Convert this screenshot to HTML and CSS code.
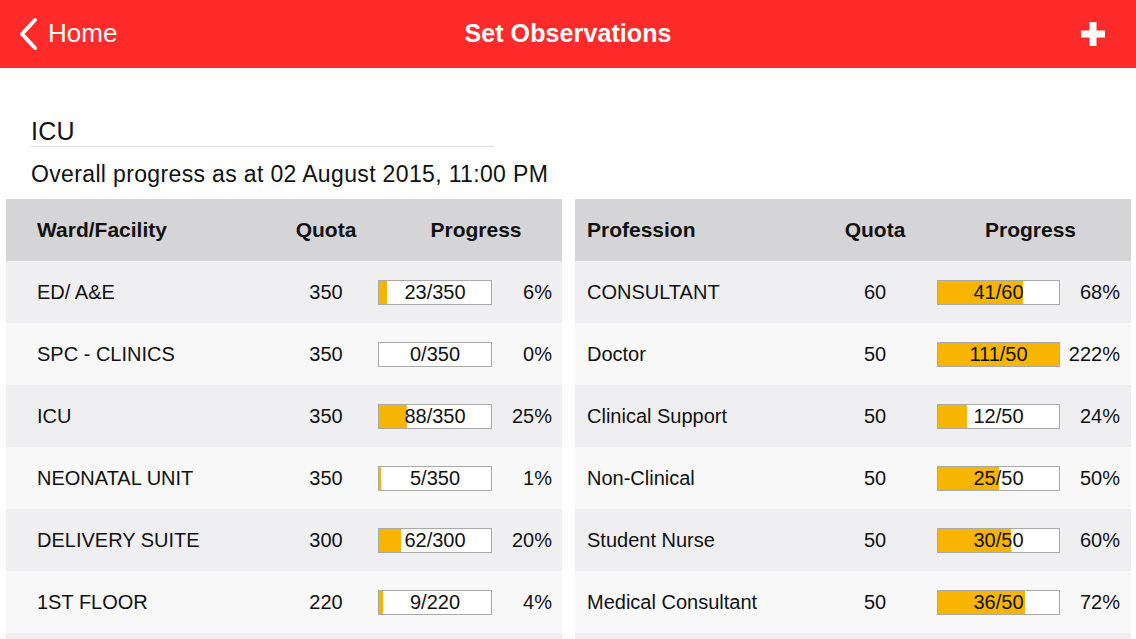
FILE: index.html
```html
<!DOCTYPE html>
<html>
<head>
<meta charset="utf-8">
<link rel="stylesheet" href="styles.css">
</head>
<body>
<header class="navbar">
  <div class="nav-back">
    <svg class="chev" width="20" height="34" viewBox="0 0 20 34"><polyline points="16,3 3,17 16,31" fill="none" stroke="#fff" stroke-width="4" stroke-linecap="round" stroke-linejoin="round"/></svg>
    <span>Home</span>
  </div>
  <div class="nav-title">Set Observations</div>
  <div class="nav-add">
    <svg width="24" height="24" viewBox="0 0 24 24"><rect x="8.5" y="0" width="7" height="24" fill="#fff"/><rect x="0" y="8.5" width="24" height="7" fill="#fff"/></svg>
  </div>
</header>

<main class="content">
  <h1 class="unit">ICU</h1>
  <p class="overall">Overall progress as at 02 August 2015, 11:00 PM</p>

  <div class="tables">
    <section class="table left">
      <div class="row head">
        <div class="c-name">Ward/Facility</div>
        <div class="c-quota">Quota</div>
        <div class="c-prog-head">Progress</div>
      </div>
      <div class="row odd">
        <div class="c-name">ED/ A&amp;E</div><div class="c-quota">350</div>
        <div class="bar"><div class="fill" style="width:7%"></div><span>23/350</span></div><div class="c-pct">6%</div>
      </div>
      <div class="row even">
        <div class="c-name">SPC - CLINICS</div><div class="c-quota">350</div>
        <div class="bar"><div class="fill" style="width:0%"></div><span>0/350</span></div><div class="c-pct">0%</div>
      </div>
      <div class="row odd">
        <div class="c-name">ICU</div><div class="c-quota">350</div>
        <div class="bar"><div class="fill" style="width:25%"></div><span>88/350</span></div><div class="c-pct">25%</div>
      </div>
      <div class="row even">
        <div class="c-name">NEONATAL UNIT</div><div class="c-quota">350</div>
        <div class="bar"><div class="fill" style="width:2%"></div><span>5/350</span></div><div class="c-pct">1%</div>
      </div>
      <div class="row odd">
        <div class="c-name">DELIVERY SUITE</div><div class="c-quota">300</div>
        <div class="bar"><div class="fill" style="width:20%"></div><span>62/300</span></div><div class="c-pct">20%</div>
      </div>
      <div class="row even">
        <div class="c-name">1ST FLOOR</div><div class="c-quota">220</div>
        <div class="bar"><div class="fill" style="width:4%"></div><span>9/220</span></div><div class="c-pct">4%</div>
      </div>
      <div class="row odd"></div>
    </section>

    <section class="table right">
      <div class="row head">
        <div class="c-name">Profession</div>
        <div class="c-quota">Quota</div>
        <div class="c-prog-head">Progress</div>
      </div>
      <div class="row odd">
        <div class="c-name">CONSULTANT</div><div class="c-quota">60</div>
        <div class="bar"><div class="fill" style="width:70%"></div><span>41/60</span></div><div class="c-pct">68%</div>
      </div>
      <div class="row even">
        <div class="c-name">Doctor</div><div class="c-quota">50</div>
        <div class="bar"><div class="fill" style="width:100%"></div><span>111/50</span></div><div class="c-pct">222%</div>
      </div>
      <div class="row odd">
        <div class="c-name">Clinical Support</div><div class="c-quota">50</div>
        <div class="bar"><div class="fill" style="width:24%"></div><span>12/50</span></div><div class="c-pct">24%</div>
      </div>
      <div class="row even">
        <div class="c-name">Non-Clinical</div><div class="c-quota">50</div>
        <div class="bar"><div class="fill" style="width:50%"></div><span>25/50</span></div><div class="c-pct">50%</div>
      </div>
      <div class="row odd">
        <div class="c-name">Student Nurse</div><div class="c-quota">50</div>
        <div class="bar"><div class="fill" style="width:60%"></div><span>30/50</span></div><div class="c-pct">60%</div>
      </div>
      <div class="row even">
        <div class="c-name">Medical Consultant</div><div class="c-quota">50</div>
        <div class="bar"><div class="fill" style="width:72%"></div><span>36/50</span></div><div class="c-pct">72%</div>
      </div>
      <div class="row odd"></div>
    </section>
  </div>
</main>
</body>
</html>
```
FILE: styles.css
```css
* { box-sizing: border-box; }
html, body { margin: 0; padding: 0; }
body {
  width: 1136px;
  height: 639px;
  overflow: hidden;
  background: #fff;
  font-family: "Liberation Sans", Arial, sans-serif;
  color: #111;
}

.navbar {
  height: 68px;
  background: #ff2a2a;
  color: #fff;
  display: flex;
  align-items: center;
  justify-content: space-between;
  padding: 0 31px 0 19px;
}
.nav-back {
  display: flex;
  align-items: center;
  gap: 9px;
  font-size: 26px;
  width: 200px;
  padding-bottom: 1px;
}
.chev { display: block; }
.nav-title {
  font-size: 25px;
  font-weight: bold;
  padding-bottom: 1px;
  margin-left: 12px;
  letter-spacing: 0.1px;
}
.nav-add {
  width: 200px;
  display: flex;
  justify-content: flex-end;
  padding-bottom: 1px;
}
.nav-add svg { display: block; }

.content { padding: 0; }

.unit {
  margin: 48px 0 0 31px;
  width: 463px;
  font-size: 25px;
  font-weight: normal;
  line-height: 30px;
  letter-spacing: 0.3px;
  border-bottom: 1px solid #dcdcdc;
}
.overall {
  margin: 14px 0 0 31px;
  font-size: 23px;
  line-height: 27px;
  letter-spacing: 0.35px;
}

.tables {
  margin-top: 11px;
  display: flex;
  gap: 13px;
  padding: 0 5px 0 6px;
}
.table {
  width: 556px;
  flex: none;
}
.row {
  height: 62px;
  display: grid;
  align-items: center;
  font-size: 20px;
}
.left .row {
  grid-template-columns: 249px 80px 12px 114px 60px;
  padding: 0 10px 0 31px;
}
.right .row {
  grid-template-columns: 248px 80px 22px 123px 60px;
  padding: 0 11px 0 12px;
}
.row.head {
  background: #d5d5d7;
  font-weight: bold;
  font-size: 21px;
  color: #111;
}
.row.odd { background: #efeff1; }
.row.even { background: #f8f8f9; }

.c-quota { text-align: center; }
.c-prog-head {
  grid-column: 4 / 6;
  text-align: center;
}
.left .c-prog-head { padding-left: 22px; }
.right .c-prog-head { padding-left: 4px; }

.bar {
  grid-column: 4;
  position: relative;
  height: 25px;
  border: 1px solid #a9a9a9;
  background: #fff;
  display: flex;
  align-items: center;
  justify-content: center;
}
.bar .fill {
  position: absolute;
  left: 0;
  top: 0;
  bottom: 0;
  background: #f7b500;
}
.bar span {
  position: relative;
  line-height: 1;
}
.c-pct { text-align: right; }
```
